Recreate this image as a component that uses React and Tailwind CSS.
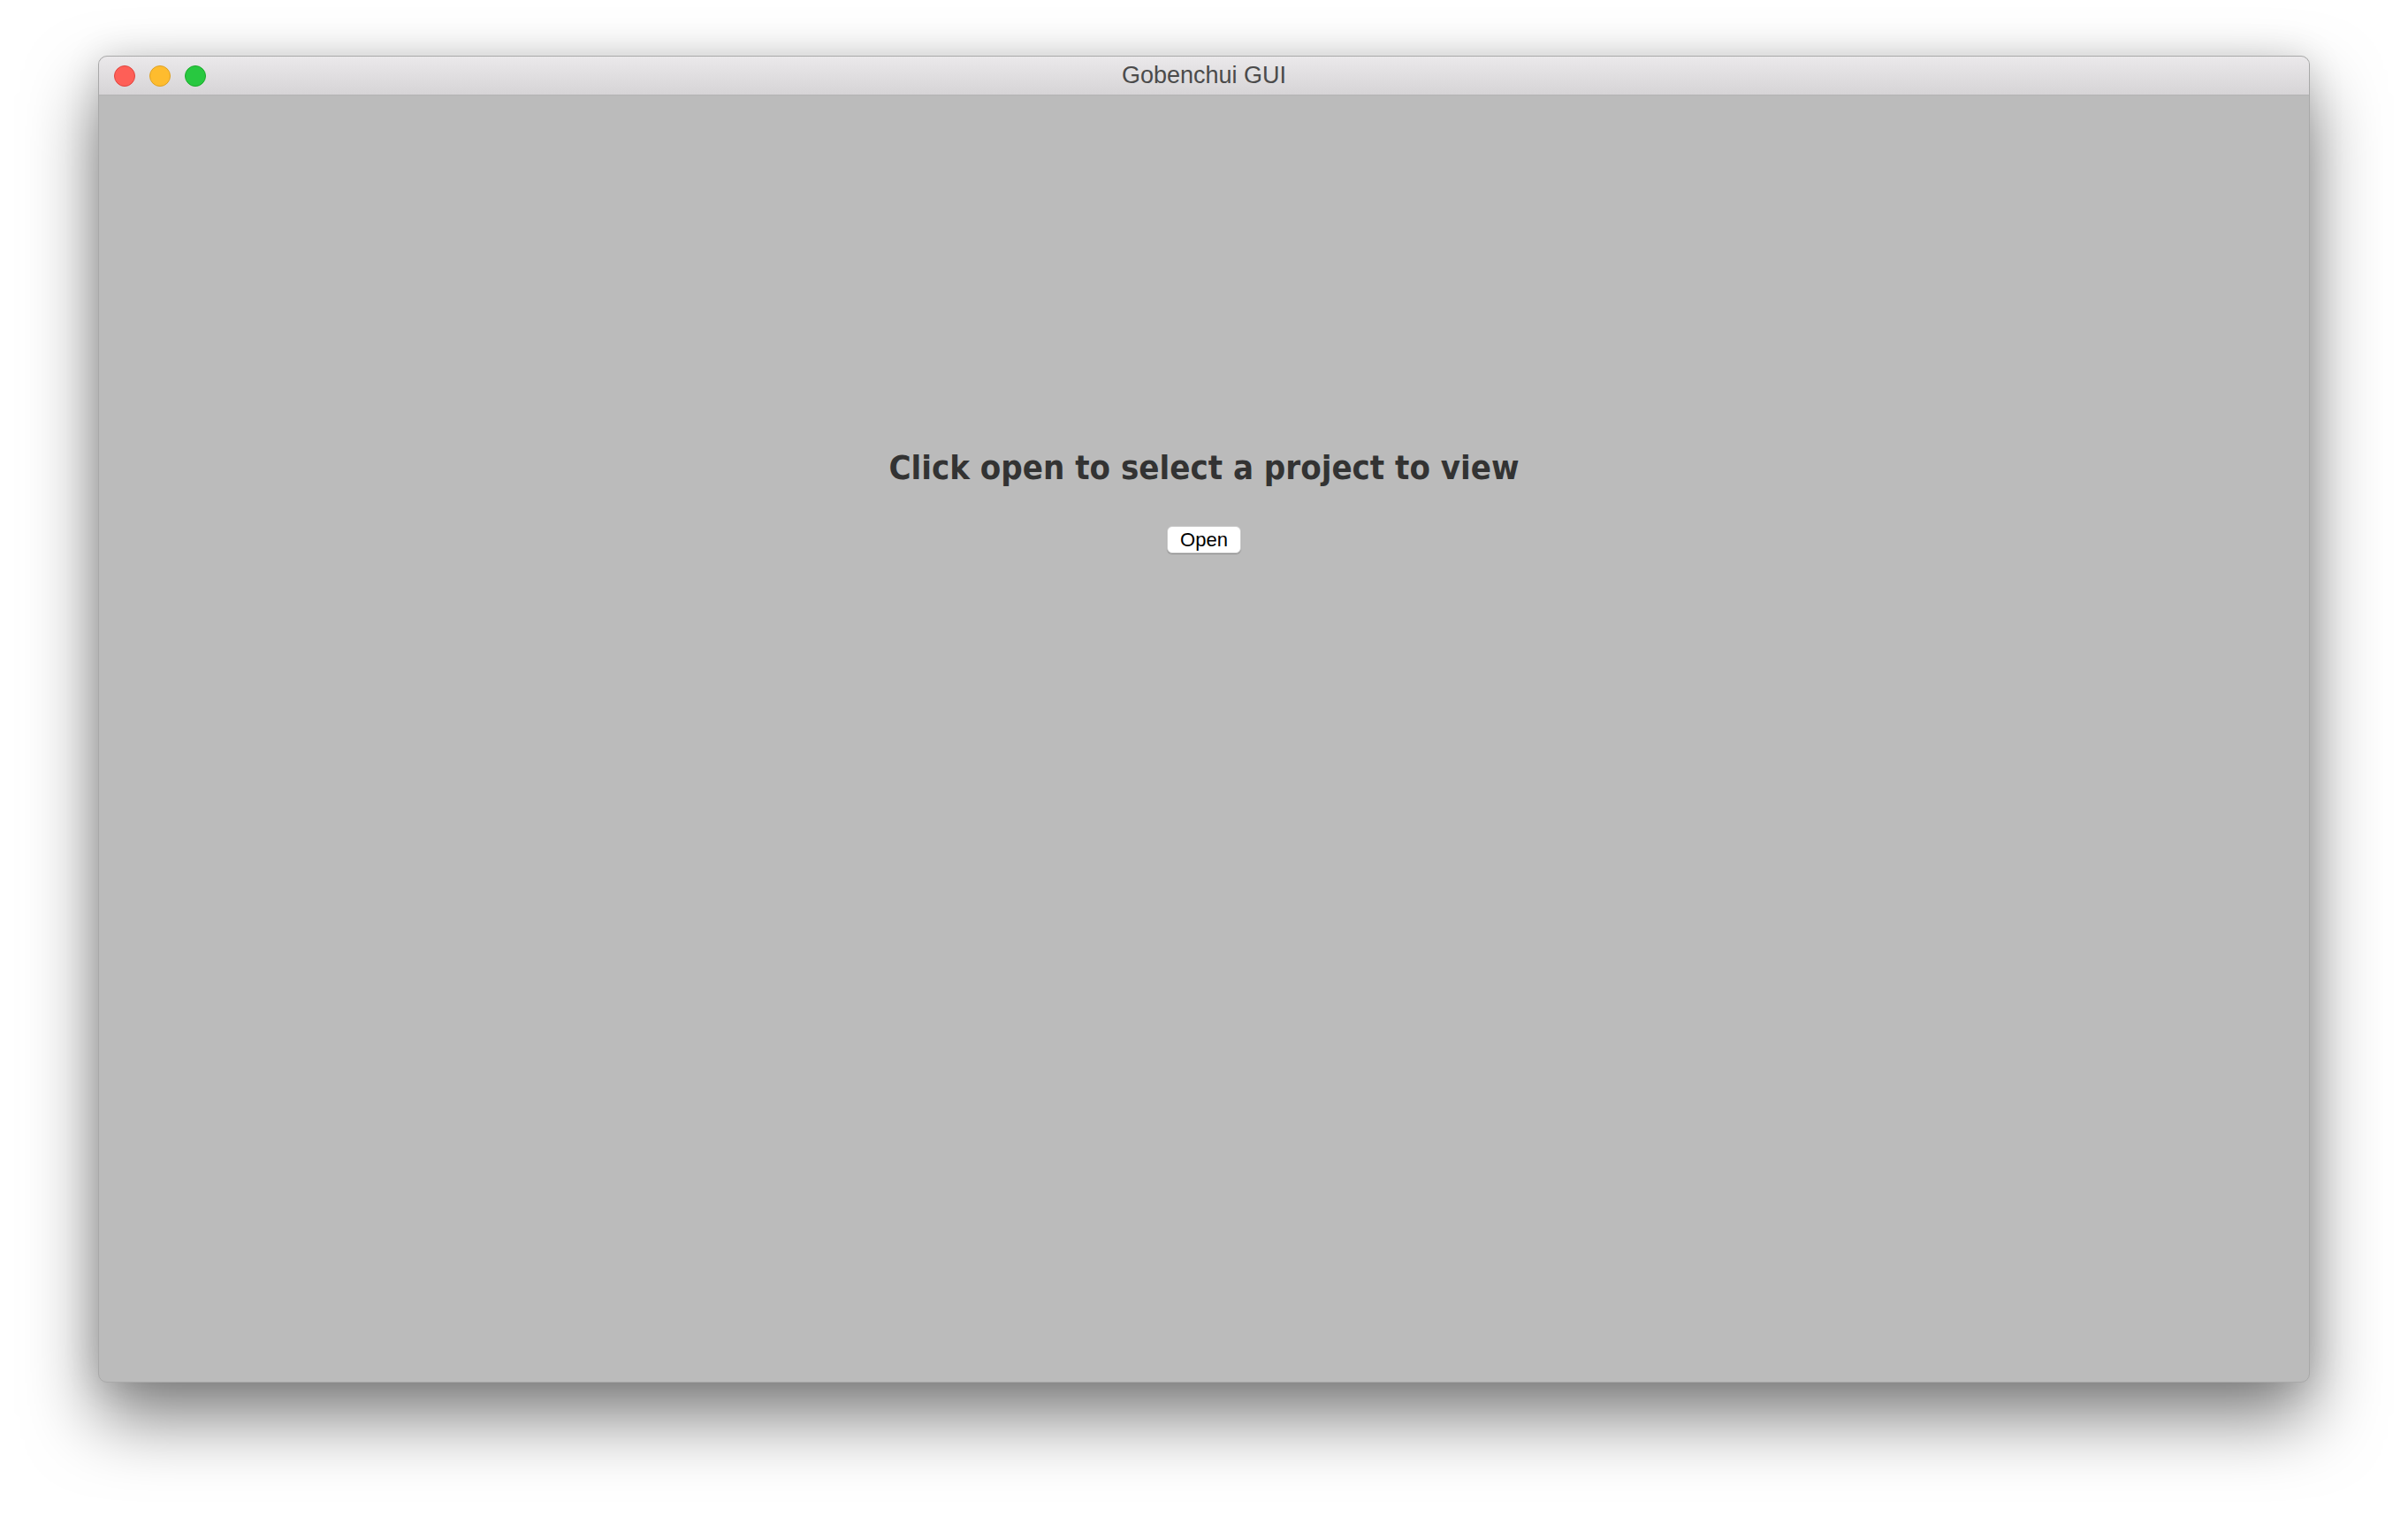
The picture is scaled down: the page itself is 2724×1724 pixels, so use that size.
import React from "react";

function TrafficLights() {
  return (
    <div className="absolute left-[17px] top-[10px] flex gap-[16px]">
      <span className="h-[24px] w-[24px] rounded-full border border-[#e0443e] bg-[#fe5f57]" />
      <span className="h-[24px] w-[24px] rounded-full border border-[#dea123] bg-[#febc2e]" />
      <span className="h-[24px] w-[24px] rounded-full border border-[#1aab29] bg-[#28c840]" />
    </div>
  );
}

export default function App() {
  return (
    <div className="min-h-screen w-full bg-white pt-[63px] px-[111px]">
      <div className="flex h-[1501px] w-[2502px] flex-col overflow-hidden rounded-[10px] border border-[#a9a9a9] bg-[#bbbbbb] shadow-[0_40px_80px_rgba(0,0,0,0.5),0_0_40px_rgba(0,0,0,0.12)]">
        {/* title bar */}
        <div className="relative flex h-[44px] shrink-0 items-center justify-center border-b border-[#b3b3b3] bg-gradient-to-b from-[#ebe9eb] to-[#d6d4d6]">
          <TrafficLights />
          <span className="font-['Liberation_Sans',sans-serif] text-[27px] leading-none text-[#4b4b4b]">Gobenchui GUI</span>
        </div>

        {/* content */}
        <div className="flex flex-1 flex-col items-center pt-[399px]">
          <h1 className="font-['DejaVu_Sans_Condensed','DejaVu_Sans',sans-serif] text-[38px] font-bold leading-[44px] text-[#333333] [font-stretch:condensed]">
            Click open to select a project to view
          </h1>
          <button className="mt-[44px] h-[31px] w-[84px] rounded-[6px] border border-[#cacaca] bg-white font-['Liberation_Sans',sans-serif] text-[22px] leading-none text-black shadow-[0_1px_1px_rgba(0,0,0,0.25)]">
            Open
          </button>
        </div>
      </div>
    </div>
  );
}
